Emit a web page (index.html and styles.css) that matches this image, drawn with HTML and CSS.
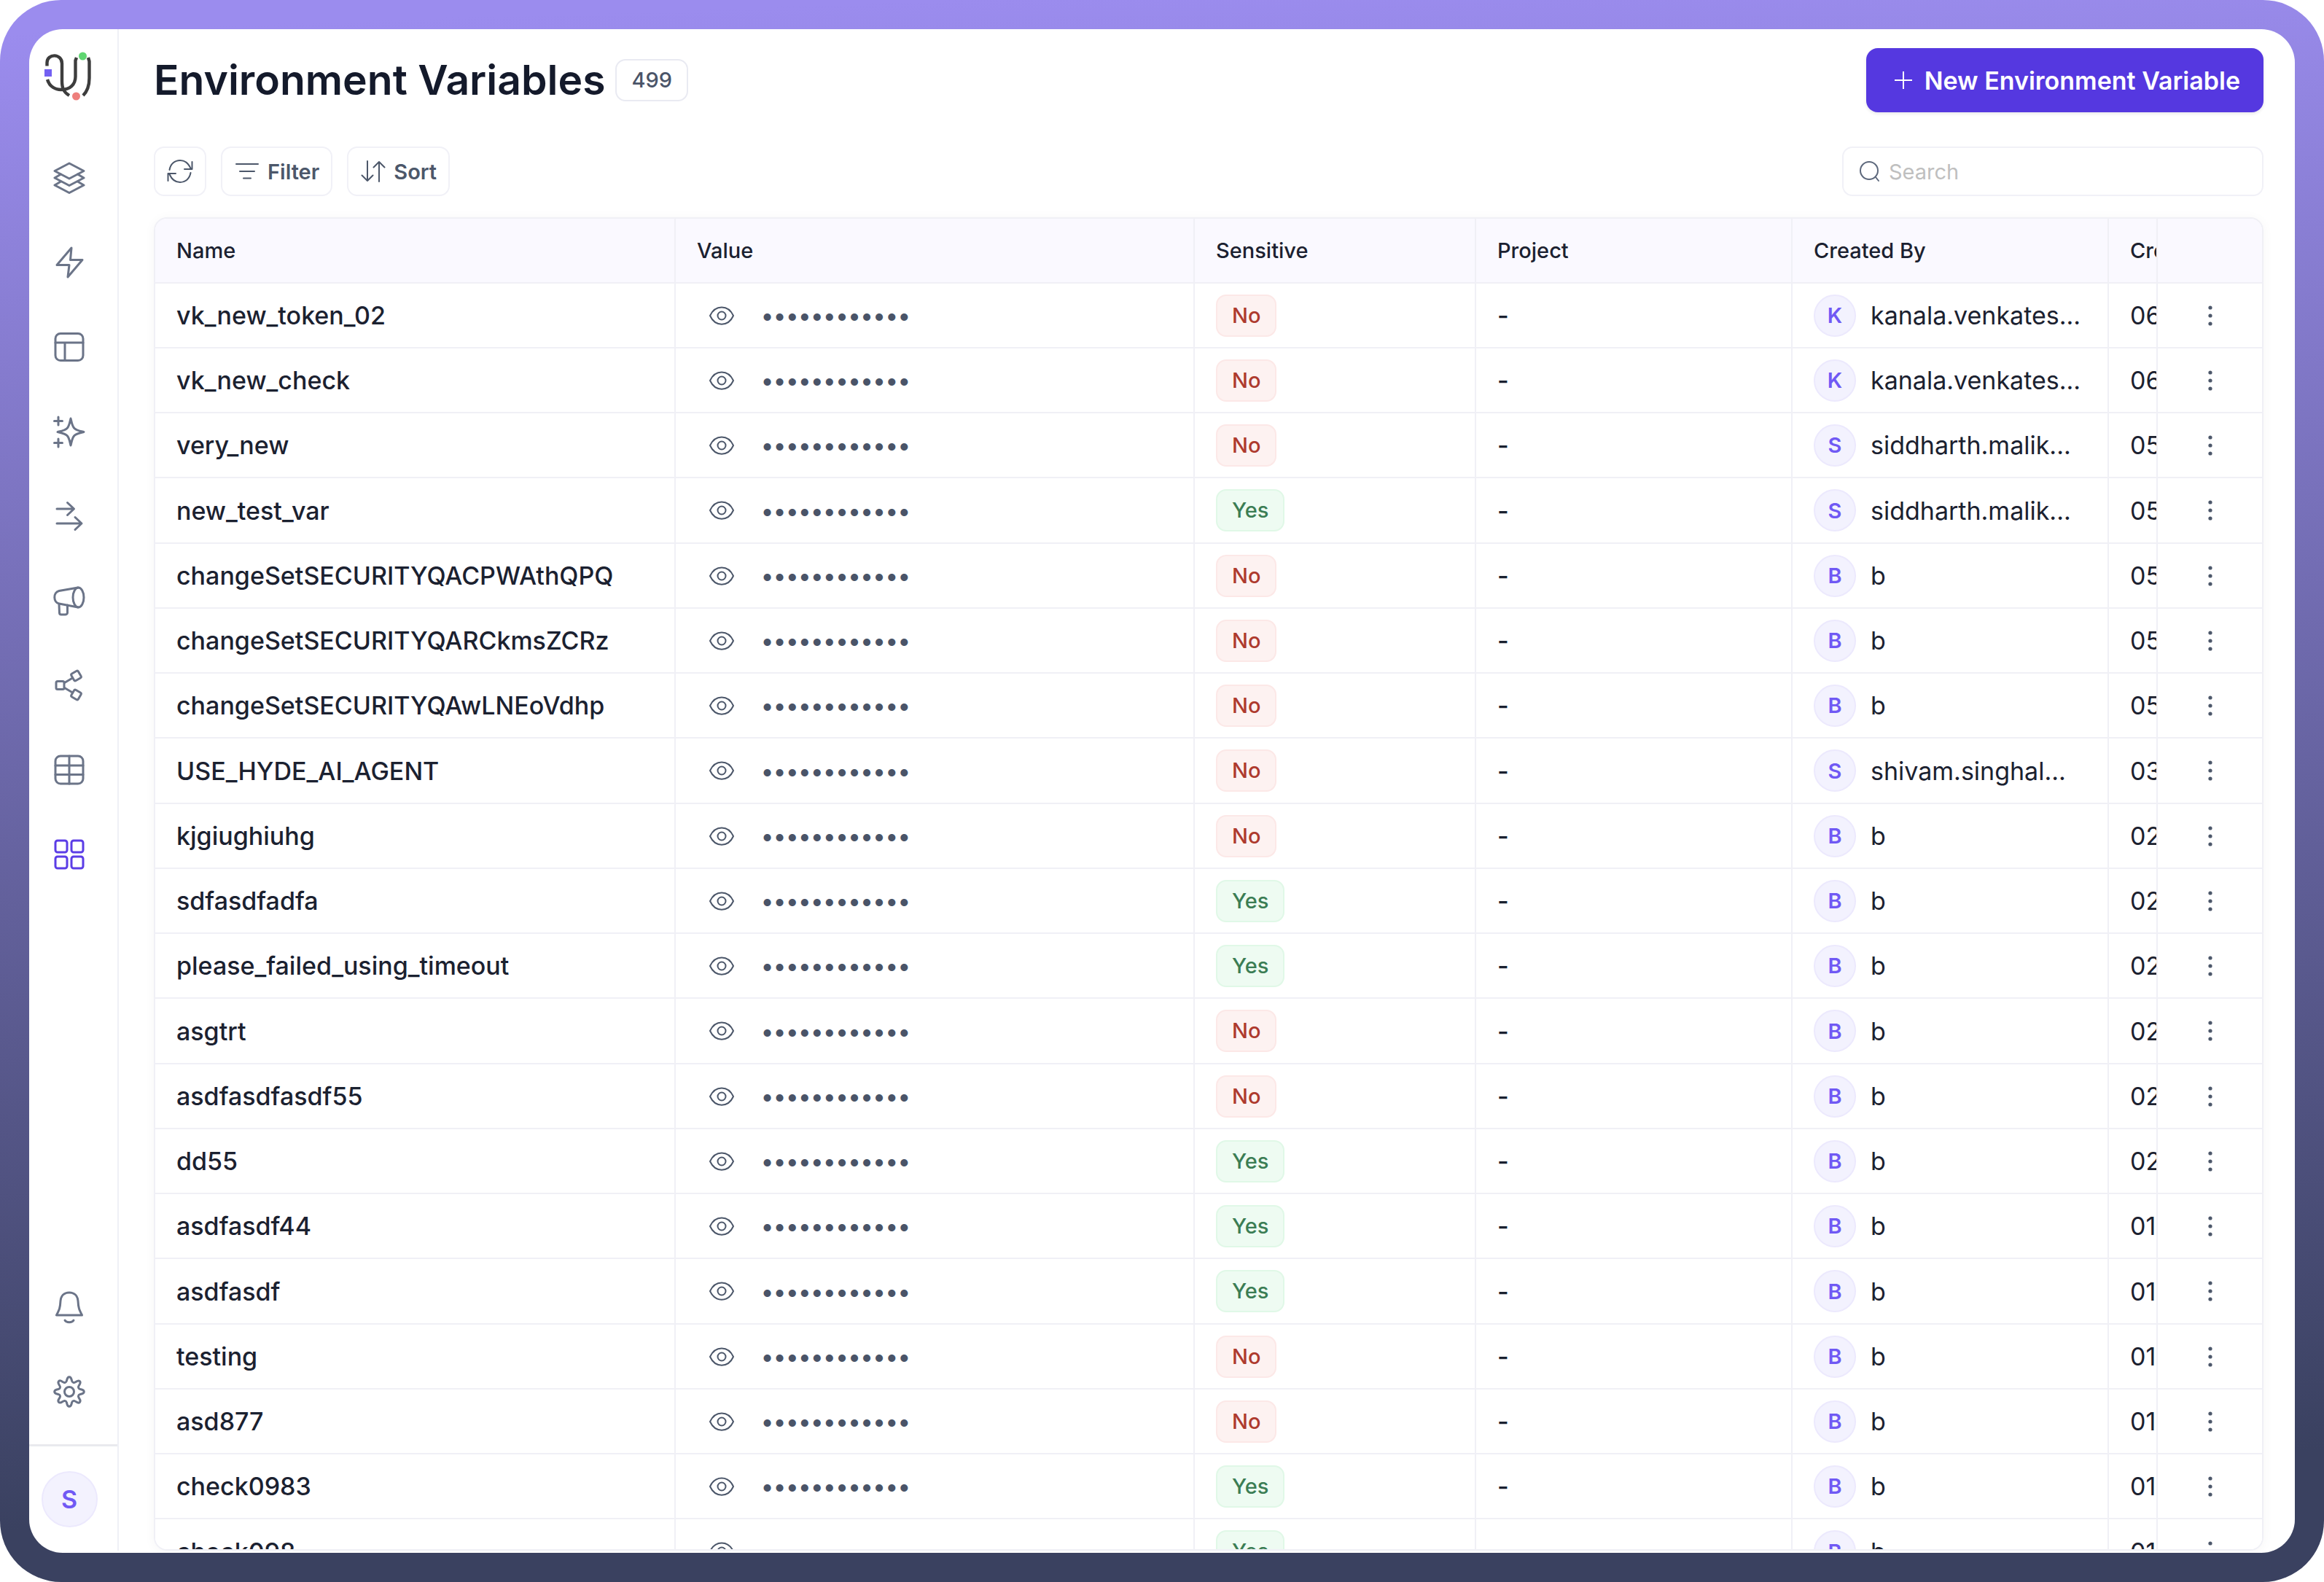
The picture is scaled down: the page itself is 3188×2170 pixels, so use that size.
FILE: index.html
```html
<!DOCTYPE html>
<html lang="en">

<head>
	<meta charset="UTF-8">
	<title>Environment Variables</title>
	<link rel="stylesheet" href="styles.css">
</head>

<body>
	<div class="frame">
		<div class="app">
			<nav class="sidebar" aria-label="Main">
				<a class="logo" href="#" aria-label="Home">
					<svg viewBox="0 0 66 68" width="66" height="68" fill="none" stroke="#3d3d3d" stroke-width="4.400">
						<path d="M4.500 19.500V15C4.500 2 25 2 25 16V40C25 50 27 55 35 60" />
						<path d="M5 38C8 48 16 52 24 52C36 52 43.500 45 43.500 34V12L45 8" />
						<path d="M61 8L62.500 13V36C62.500 47 60 54 54 60" />
						<rect x="1" y="24" width="10" height="10" fill="#7360f2" stroke="none" />
						<circle cx="53.500" cy="6" r="5.500" fill="#5fd671" stroke="none" />
						<circle cx="44.500" cy="61" r="5.500" fill="#ee7f7c" stroke="none" />
					</svg>
				</a>

				<ul class="menu">
					<li><a href="#" aria-label="Projects"><svg class="icon" viewBox="0 0 48 48">
						<path d="M24 4L44 14.500L24 25L4 14.500Z" />
						<path d="M12.500 19L4 24L24 34.500L44 24L35.500 19" />
						<path d="M12.500 29L4 34L24 44.500L44 34L35.500 29" />
					</svg></a></li>
					<li><a href="#" aria-label="Automations"><svg class="icon" viewBox="0 0 48 48">
						<path d="M27 4L7 27.500H24L22 44L42 20.500H25.500Z" />
					</svg></a></li>
					<li><a href="#" aria-label="Interfaces"><svg class="icon" viewBox="0 0 48 48">
						<rect x="5" y="5.500" width="38" height="37" rx="7" />
						<path d="M5 18H43M18 18V42" />
					</svg></a></li>
					<li><a href="#" aria-label="AI"><svg class="icon" viewBox="0 0 48 48">
						<path d="M26 6C27 10 28 17 31 19.500C34 22.500 40 23.500 44 24.500C40 25.500 34 26.500 31 29.500C28 32 27 39 26 43C25 39 24 32 21 29.500C18 26.500 12 25.500 8 24.500C12 23.500 18 22.500 21 19.500C24 17 25 10 26 6Z" />
						<path d="M9 4V15M3.500 9.500H14.500M9 34V45M3.500 39.500H14.500" />
					</svg></a></li>
					<li><a href="#" aria-label="Flows"><svg class="icon" viewBox="0 0 48 48">
						<path d="M7 14H30M21.500 5.500L30.500 14L21.500 22.500M7 34H40.500M32 25.500L41 34L32 42.500" />
					</svg></a></li>
					<li><a href="#" aria-label="Announcements"><svg class="icon" viewBox="0 0 48 48">
						<ellipse cx="36.500" cy="19.500" rx="7.500" ry="13.500" />
						<path d="M36 6L10 10.500C1.500 12.500 2 26.500 10 28L36 33" />
						<path d="M10 28.500L10.500 40.500C10.500 42 11.500 43 13 43H18.500C20 43 21.500 42 21.500 40.500V30" />
					</svg></a></li>
					<li><a href="#" aria-label="Connections"><svg class="icon" viewBox="0 0 48 48">
						<rect x="6" y="18.500" width="11" height="11" rx="2" />
						<rect x="28" y="5.500" width="11" height="11" rx="2" transform="rotate(-30 33.500 11)" />
						<rect x="28" y="31.500" width="11" height="11" rx="2" transform="rotate(30 33.500 37)" />
						<path d="M17.500 20.500L28.500 14M17.500 27.500L28.500 34" />
					</svg></a></li>
					<li><a href="#" aria-label="Tables"><svg class="icon" viewBox="0 0 48 48">
						<rect x="5" y="5" width="38" height="38" rx="7" />
						<path d="M24 5V43M5 18H43M5 30.500H43" />
					</svg></a></li>
					<li><a class="active" href="#" aria-label="More"><svg class="icon" viewBox="0 0 48 48">
						<rect x="5" y="5" width="16" height="16" rx="3" />
						<rect x="27" y="5" width="16" height="16" rx="3" />
						<rect x="5" y="27" width="16" height="16" rx="3" />
						<rect x="27" y="27" width="16" height="16" rx="3" />
					</svg></a></li>
				</ul>

				<ul class="menu menu-bottom">
					<li><a href="#" aria-label="Notifications"><svg class="icon" viewBox="0 0 48 48">
						<path d="M24 4C17 4 12.500 8.500 12 15.500C11.500 25 10.500 27 6.500 35H41.500C37.500 27 36.500 25 36 15.500C35.500 8.500 31 4 24 4Z" />
						<path d="M18 42C20 45.500 28 45.500 30 42" />
					</svg></a></li>
					<li><a href="#" aria-label="Settings"><svg class="icon" viewBox="0 0 48 48">
						<circle cx="24" cy="24" r="6.500" />
						<path d="M20.300 9.400C21 7.500 21 3.700 24 3.700S27 7.500 27.700 9.400C28.400 11.500 30.500 12 32 11C34 10 36.200 7.500 38.400 9.600S38 14 37 16C36 17.500 36.500 19.600 38.600 20.300C40.500 21 44.300 21 44.300 24S40.500 27 38.600 27.700C36.500 28.400 36 30.500 37 32C38 34 40.500 36.200 38.400 38.400S34 38 32 37C30.500 36 28.400 36.500 27.700 38.600C27 40.500 27 44.300 24 44.300S21 40.500 20.300 38.600C19.600 36.500 17.500 36 16 37C14 38 11.800 40.500 9.600 38.400S10 34 11 32C12 30.500 11.500 28.400 9.400 27.700C7.500 27 3.700 27 3.700 24S7.500 21 9.400 20.300C11.500 19.600 12 17.500 11 16C10 14 7.500 11.800 9.600 9.600S14 10 16 11C17.500 12 19.600 11.500 20.300 9.400Z" />
					</svg></a></li>
				</ul>

				<div class="account">
					<button class="avatar avatar-lg" type="button">S</button>
				</div>
			</nav>

			<main class="content">
				<header class="page-header">
					<h1>Environment Variables</h1>
					<span class="count">499</span>
					<button class="btn-primary" type="button">
						<svg viewBox="0 0 26 26" width="26" height="26"><path d="M13 1V25M1 13H25" /></svg>
						New Environment Variable
					</button>
				</header>

				<div class="toolbar">
					<button class="btn btn-icon" type="button" aria-label="Refresh">
						<svg class="icon-sm" viewBox="0 0 36 36">
							<path d="M3.500 16C5 7.500 11 3 18 3C25 3 29.500 7 32.500 14M34.500 5V15H24" />
							<path d="M32.500 20C31 28.500 25 33 18 33C11 33 6.500 29 3.500 22M1.500 31V21H12" />
						</svg>
					</button>
					<button class="btn" type="button">
						<svg class="icon-sm" viewBox="0 0 36 36"><path d="M3 8H33M8 18H28M13 27.500H23" /></svg>
						Filter
					</button>
					<button class="btn" type="button">
						<svg class="icon-sm" viewBox="0 0 36 36"><path d="M10 4V31M2.500 23.500L10 31L17.500 23.500M26 32V5M18.500 12.500L26 5L33.500 12.500" /></svg>
						Sort
					</button>
					<label class="search">
						<svg class="icon-sm" viewBox="0 0 36 36"><circle cx="17" cy="17" r="12" /><path d="M26 26L30 31" /></svg>
						<input type="search" placeholder="Search" aria-label="Search">
					</label>
				</div>

				<div class="table-wrap">
					<table>
						<colgroup>
							<col class="col-name">
							<col class="col-value">
							<col class="col-sensitive">
							<col class="col-project">
							<col class="col-by">
							<col class="col-at">
							<col class="col-actions">
						</colgroup>
						<thead>
							<tr>
								<th>Name</th>
								<th>Value</th>
								<th>Sensitive</th>
								<th>Project</th>
								<th>Created By</th>
								<th>Created At</th>
								<th class="actions"></th>
							</tr>
						</thead>
						<tbody id="rows"></tbody>
					</table>
				</div>
			</main>
		</div>
	</div>

	<script src="script.js"></script>
</body>

</html>
```
FILE: styles.css
```css
* {
	box-sizing: border-box;
}

body {
	margin: 0;
	font-family: Inter, sans-serif;
	font-size: 34px;
	color: #1b2130;
	background-color: #fff;
}

button,
input {
	font-family: inherit;
}

ul {
	margin: 0;
	padding: 0;
	list-style: none;
}

/* Gradient border around the app */
.frame {
	height: 100vh;
	padding: 40px;
	border-radius: 84px;
	background: linear-gradient(178deg, #9b8cee 2%, #3a4160 92%);
}

.app {
	display: flex;
	height: 100%;
	padding-bottom: 3px;
	border-radius: 46px;
	background-color: #fff;
	overflow: hidden;
}

/* Sidebar */
.sidebar {
	display: flex;
	flex-direction: column;
	flex: none;
	width: 123px;
	border-right: 2px solid #eff0f6;
}

.logo {
	display: flex;
	height: 156px;
	padding: 31px 0 0 20px;
}

.menu {
	display: flex;
	flex-direction: column;
	gap: 20px;
	padding-right: 11px;
}

.menu-bottom {
	margin-top: auto;
}

.menu a {
	display: flex;
	align-items: center;
	justify-content: center;
	height: 96px;
	color: #6b7488;
}

.menu a.active {
	color: #5b3de6;
}

.icon {
	width: 48px;
	height: 48px;
	fill: none;
	stroke: currentColor;
	stroke-width: 3;
	stroke-linecap: round;
	stroke-linejoin: round;
}

.icon-sm {
	flex: none;
	width: 36px;
	height: 36px;
	fill: none;
	stroke: currentColor;
	stroke-width: 2;
	stroke-linecap: round;
	stroke-linejoin: round;
}

.account {
	display: flex;
	justify-content: center;
	margin-top: 24px;
	padding: 34px 11px 32px 0;
	border-top: 3px solid #e9eaee;
}

.avatar {
	display: inline-flex;
	align-items: center;
	justify-content: center;
	flex: none;
	width: 58px;
	height: 58px;
	padding: 0;
	border: 2px solid #ece9fd;
	border-radius: 50%;
	font-size: 29px;
	font-weight: 600;
	color: #7059f4;
	background-color: #f3f2fe;
}

.avatar-lg {
	width: 77px;
	height: 77px;
	font-size: 34px;
}

/* Content */
.content {
	display: flex;
	flex-direction: column;
	flex: 1;
	min-width: 0;
	padding: 26px 43px 0 48px;
}

.page-header {
	display: flex;
	align-items: center;
	gap: 14px;
}

h1 {
	margin: 0;
	font-size: 57px;
	font-weight: 600;
	line-height: 72px;
	color: #141a2b;
}

.count {
	height: 58px;
	padding: 0 20px;
	border: 2px solid #e9eaf2;
	border-radius: 14px;
	font-size: 29px;
	font-weight: 500;
	line-height: 54px;
	color: #4a5468;
}

.btn-primary {
	display: flex;
	align-items: center;
	gap: 16px;
	height: 88px;
	margin-left: auto;
	padding: 0 32px 0 38px;
	border: 0;
	border-radius: 16px;
	font-size: 34px;
	font-weight: 600;
	color: #fff;
	background-color: #5538e0;
	box-shadow: 0 2px 4px rgba(16, 24, 40, 0.1);
}

.btn-primary svg {
	fill: none;
	stroke: #fff;
	stroke-width: 2;
}

.toolbar {
	display: flex;
	gap: 20px;
	margin: 47px 0 29px;
}

.btn {
	display: flex;
	align-items: center;
	gap: 10px;
	height: 68px;
	padding: 0 16px;
	border: 2px solid #f1f1f7;
	border-radius: 14px;
	font-size: 29px;
	font-weight: 600;
	color: #4c576a;
	background-color: #fff;
}

.search {
	display: flex;
	align-items: center;
	gap: 8px;
	width: 578px;
	height: 68px;
	margin-left: auto;
	padding: 0 18px;
	border: 2px solid #f1f1f7;
	border-radius: 14px;
	color: #5d687c;
}

.search input {
	flex: 1;
	min-width: 0;
	padding: 0;
	border: 0;
	outline: 0;
	font-size: 29px;
	background: none;
}

.search input::placeholder {
	color: #bfbfbf;
}

/* Table */
.table-wrap {
	flex: 1;
	min-height: 0;
	border: 2px solid #f0f0f6;
	border-radius: 18px;
	overflow: hidden;
	box-shadow: 0 2px 16px rgba(16, 24, 40, 0.04);
}

table {
	width: calc(100% + 300px);
	border-collapse: separate;
	border-spacing: 0;
	table-layout: fixed;
}

.col-name {
	width: 714px;
}

.col-value {
	width: 712px;
}

.col-sensitive {
	width: 386px;
}

.col-project,
.col-by {
	width: 434px;
}

.col-actions {
	width: 145px;
}

th,
td {
	height: 89px;
	padding: 0 29px;
	border-right: 2px solid #f0f0f6;
	border-bottom: 2px solid #f0f0f6;
	text-align: left;
	white-space: nowrap;
	overflow: hidden;
}

tbody tr:nth-child(4n) td {
	height: 90px;
}

th {
	font-size: 29px;
	font-weight: 500;
	background-color: #faf9ff;
}

td {
	font-weight: 500;
	background-color: #fff;
}

/* Last column stays on top of the ones that scroll under it */
.actions {
	position: sticky;
	right: 0;
	padding: 0;
	border-left: 2px solid #f0f0f6;
	border-right: 0;
	text-align: center;
}

.value,
.user {
	display: flex;
	align-items: center;
	gap: 20px;
}

.user,
.date {
	font-weight: 400;
}

.dots {
	font-size: 32px;
	color: #4a5468;
}

.icon-btn {
	display: inline-flex;
	align-items: center;
	justify-content: center;
	width: 68px;
	height: 68px;
	padding: 0;
	border: 0;
	color: #4c576a;
	background: none;
	vertical-align: middle;
}

.tag {
	display: inline-block;
	height: 58px;
	padding: 0 20px;
	border: 2px solid;
	border-radius: 14px;
	font-size: 29px;
	line-height: 54px;
	vertical-align: middle;
}

.tag-no {
	color: #ae3a2e;
	border-color: #fce8e7;
	background-color: #fdf2f1;
}

.tag-yes {
	color: #3b7d54;
	border-color: #e0f8e7;
	background-color: #eefbf2;
}
```
FILE: script.js
```js
var variables = [
	['vk_new_token_02', 'No', 'kanala.venkates...', '06'],
	['vk_new_check', 'No', 'kanala.venkates...', '06'],
	['very_new', 'No', 'siddharth.malik...', '05'],
	['new_test_var', 'Yes', 'siddharth.malik...', '05'],
	['changeSetSECURITYQACPWAthQPQ', 'No', 'b', '05'],
	['changeSetSECURITYQARCkmsZCRz', 'No', 'b', '05'],
	['changeSetSECURITYQAwLNEoVdhp', 'No', 'b', '05'],
	['USE_HYDE_AI_AGENT', 'No', 'shivam.singhal...', '03'],
	['kjgiughiuhg', 'No', 'b', '02'],
	['sdfasdfadfa', 'Yes', 'b', '02'],
	['please_failed_using_timeout', 'Yes', 'b', '02'],
	['asgtrt', 'No', 'b', '02'],
	['asdfasdfasdf55', 'No', 'b', '02'],
	['dd55', 'Yes', 'b', '02'],
	['asdfasdf44', 'Yes', 'b', '01'],
	['asdfasdf', 'Yes', 'b', '01'],
	['testing', 'No', 'b', '01'],
	['asd877', 'No', 'b', '01'],
	['check0983', 'Yes', 'b', '01'],
	['check098', 'Yes', 'b', '01']
];

var eye = '<svg class="icon-sm" viewBox="0 0 36 36"><path d="M2 18C9 2.500 27 2.500 34 18C27 33.500 9 33.500 2 18Z" /><circle cx="18" cy="18" r="5.500" /></svg>';
var kebab = '<svg width="6" height="28" viewBox="0 0 6 28" fill="currentColor"><circle cx="3" cy="3" r="2.600" /><circle cx="3" cy="14" r="2.600" /><circle cx="3" cy="25" r="2.600" /></svg>';

document.getElementById('rows').innerHTML = variables.map(function (v) {
	return '<tr>' +
		'<td>' + v[0] + '</td>' +
		'<td><div class="value"><button class="icon-btn" type="button" aria-label="Show value">' + eye + '</button><span class="dots">••••••••••••</span></div></td>' +
		'<td><span class="tag tag-' + v[1].toLowerCase() + '">' + v[1] + '</span></td>' +
		'<td>-</td>' +
		'<td><div class="user"><span class="avatar">' + v[2][0].toUpperCase() + '</span>' + v[2] + '</div></td>' +
		'<td class="date">' + v[3] + '</td>' +
		'<td class="actions"><button class="icon-btn" type="button" aria-label="Actions">' + kebab + '</button></td>' +
		'</tr>';
}).join('');
```
